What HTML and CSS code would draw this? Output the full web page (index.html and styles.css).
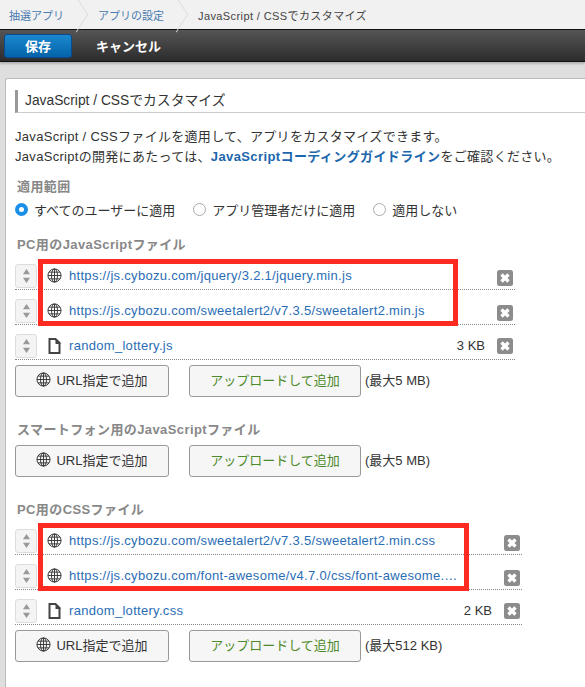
FILE: index.html
```html
<!DOCTYPE html>
<html lang="ja">
<head>
    <meta charset="UTF-8">
    <title>JavaScript / CSSでカスタマイズ</title>
    <link rel="stylesheet" href="styles.css">
</head>
<body>
    <svg class="defs" width="0" height="0">
        <symbol id="globe" viewBox="0 0 16 16">
            <g fill="none" stroke="#333" stroke-width="1">
                <circle cx="8" cy="8" r="7"/>
                <ellipse cx="8" cy="8" rx="3.2" ry="7"/>
                <path d="M8 1v14M1 8h14M2.2 4.4h11.6M2.2 11.6h11.6"/>
            </g>
        </symbol>
        <symbol id="file" viewBox="0 0 12 16">
            <path fill="none" stroke="#444" stroke-width="2" d="M1 1h6l4 4v10H1z"/>
            <path fill="#444" d="M7 1h1l4 4v1H7z"/>
        </symbol>
        <symbol id="updown" viewBox="0 0 10 18">
            <path fill="#999" d="M5 1l4 6H1zM5 17l-4-6h8z"/>
        </symbol>
        <symbol id="cross" viewBox="0 0 16 16">
            <rect width="16" height="16" rx="2.5" fill="#8c8c8c"/>
            <path stroke="#fff" stroke-width="3.4" d="M4.5 4.5l7 7M11.5 4.5l-7 7"/>
        </symbol>
    </svg>

    <nav class="breadcrumb">
        <a class="crumb" href="#">抽選アプリ</a>
        <a class="crumb" href="#">アプリの設定</a>
        <span class="crumb current">JavaScript / CSSでカスタマイズ</span>
    </nav>

    <div class="toolbar">
        <button class="save">保存</button>
        <button class="cancel">キャンセル</button>
    </div>

    <main class="page">
        <div class="card">
            <h1 class="title">JavaScript / CSSでカスタマイズ</h1>
            <p class="intro">JavaScript / CSSファイルを適用して、アプリをカスタマイズできます。<br>JavaScriptの開発にあたっては、<a class="guide" href="#">JavaScriptコーディングガイドライン</a>をご確認ください。</p>

            <h2 class="label scope-label">適用範囲</h2>
            <div class="scope">
                <label class="radio"><span class="dot on"></span>すべてのユーザーに適用</label>
                <label class="radio"><span class="dot"></span>アプリ管理者だけに適用</label>
                <label class="radio"><span class="dot"></span>適用しない</label>
            </div>

            <h2 class="label js-label">PC用のJavaScriptファイル</h2>
            <div class="files js-files">
                <div class="mark mark-js"></div>
                <div class="row url-row">
                    <span class="sort"><svg width="9" height="16"><use href="#updown"/></svg></span>
                    <svg class="icon" width="15" height="15"><use href="#globe"/></svg>
                    <a class="name" href="#">https://js.cybozu.com/jquery/3.2.1/jquery.min.js</a>
                    <svg class="remove" width="16" height="16"><use href="#cross"/></svg>
                </div>
                <div class="row url-row">
                    <span class="sort"><svg width="9" height="16"><use href="#updown"/></svg></span>
                    <svg class="icon" width="15" height="15"><use href="#globe"/></svg>
                    <a class="name" href="#">https://js.cybozu.com/sweetalert2/v7.3.5/sweetalert2.min.js</a>
                    <svg class="remove" width="16" height="16"><use href="#cross"/></svg>
                </div>
                <div class="row">
                    <span class="sort"><svg width="9" height="16"><use href="#updown"/></svg></span>
                    <svg class="icon" width="15" height="16"><use href="#file"/></svg>
                    <a class="name" href="#">random_lottery.js</a>
                    <span class="size">3 KB</span>
                    <svg class="remove" width="16" height="16"><use href="#cross"/></svg>
                </div>
            </div>
            <div class="actions">
                <button class="btn url"><svg width="15" height="15"><use href="#globe"/></svg>URL指定で追加</button>
                <button class="btn upload">アップロードして追加</button>
                <span class="limit">(最大5 MB)</span>
            </div>

            <h2 class="label phone-label">スマートフォン用のJavaScriptファイル</h2>
            <div class="actions">
                <button class="btn url"><svg width="15" height="15"><use href="#globe"/></svg>URL指定で追加</button>
                <button class="btn upload">アップロードして追加</button>
                <span class="limit">(最大5 MB)</span>
            </div>

            <h2 class="label css-label">PC用のCSSファイル</h2>
            <div class="files css-files">
                <div class="mark mark-css"></div>
                <div class="row url-row">
                    <span class="sort"><svg width="9" height="16"><use href="#updown"/></svg></span>
                    <svg class="icon" width="15" height="15"><use href="#globe"/></svg>
                    <a class="name" href="#">https://js.cybozu.com/sweetalert2/v7.3.5/sweetalert2.min.css</a>
                    <svg class="remove" width="16" height="16"><use href="#cross"/></svg>
                </div>
                <div class="row url-row">
                    <span class="sort"><svg width="9" height="16"><use href="#updown"/></svg></span>
                    <svg class="icon" width="15" height="15"><use href="#globe"/></svg>
                    <a class="name" href="#">https://js.cybozu.com/font-awesome/v4.7.0/css/font-awesome.min.css</a>
                    <svg class="remove" width="16" height="16"><use href="#cross"/></svg>
                </div>
                <div class="row">
                    <span class="sort"><svg width="9" height="16"><use href="#updown"/></svg></span>
                    <svg class="icon" width="15" height="16"><use href="#file"/></svg>
                    <a class="name" href="#">random_lottery.css</a>
                    <span class="size">2 KB</span>
                    <svg class="remove" width="16" height="16"><use href="#cross"/></svg>
                </div>
            </div>
            <div class="actions">
                <button class="btn url"><svg width="15" height="15"><use href="#globe"/></svg>URL指定で追加</button>
                <button class="btn upload">アップロードして追加</button>
                <span class="limit">(最大512 KB)</span>
            </div>
        </div>
    </main>
</body>
</html>
```

FILE: styles.css
```css
html, body {
    height: 687px;
    overflow: hidden;
}

body {
    margin: 0;
    font-family: "Liberation Sans", "Noto Sans CJK JP", sans-serif;
    font-size: 13px;
    color: #333;
    background-color: #dedede;
}

.defs {
    position: absolute;
}

button {
    font-family: inherit;
}

a {
    text-decoration: none;
}

.breadcrumb {
    display: flex;
    height: 29px;
    background-color: #f1f1f1;
}

.crumb {
    display: flex;
    align-items: center;
    position: relative;
    font-size: 11px;
    color: #4a7ab0;
    padding-left: 9px;
    padding-right: 25px;
}

.crumb:not(.current)::after {
    content: "";
    position: absolute;
    right: 2px;
    top: -1px;
    width: 20px;
    height: 20px;
    border-top: 1px solid #ddd;
    border-right: 1px solid #ddd;
    transform: translateY(5px) rotate(45deg) skew(12deg, 12deg);
}

.current {
    color: #444;
    letter-spacing: 0.4px;
}

.toolbar {
    display: flex;
    align-items: center;
    height: 31px;
    border-top: 1px solid #111;
    border-bottom: 1px solid #111;
    background: linear-gradient(#555, #2c2c2c);
    box-shadow: 0 2px 2px rgba(0, 0, 0, 0.2);
}

.save {
    width: 68px;
    height: 24px;
    margin-left: 4px;
    border: 1px solid #0a4a8c;
    border-radius: 3px;
    background: linear-gradient(#1b88cf, #0463a8);
    color: #fff;
    font-size: 13px;
    font-weight: bold;
}

.cancel {
    margin-left: 24px;
    padding: 0;
    border: none;
    background: none;
    color: #fff;
    font-size: 13px;
    font-weight: bold;
}

.page {
    padding: 16px 0 0 5px;
}

.card {
    height: 620px;
    padding: 11px 0 0 9px;
    background-color: #fff;
    border: 1px solid #bbb;
    border-right: none;
    border-radius: 3px 0 0 0;
}

.title {
    margin: 0;
    height: 22px;
    line-height: 22px;
    padding-left: 7px;
    border-left: 3px solid #999;
    border-bottom: 1px solid #ccc;
    font-size: 13.8px;
    font-weight: normal;
    color: #333;
}

.intro {
    margin: 14px 0 0;
    line-height: 20px;
    font-size: 13px;
    letter-spacing: 0.3px;
}

.guide {
    color: #1b66ad;
    font-weight: bold;
    letter-spacing: 0.4px;
}

.label {
    margin: 0 0 0 2px;
    font-size: 13px;
    line-height: 16px;
    font-weight: bold;
    color: #888;
    letter-spacing: 0.4px;
}

.scope-label {
    margin-top: 12px;
}

.scope {
    display: flex;
    gap: 18px;
    margin-top: 6px;
    font-size: 13px;
}

.radio {
    display: flex;
    align-items: center;
    gap: 6px;
    height: 16px;
}

.dot {
    width: 11px;
    height: 11px;
    border: 1px solid #aaa;
    border-radius: 50%;
    background-color: #fff;
}

.dot.on {
    width: 5px;
    height: 5px;
    border: 4px solid #1a8fe8;
}

.js-label {
    margin-top: 20px;
}

.phone-label,
.css-label {
    margin-top: 25px;
}

.files {
    position: relative;
    margin-top: 2px;
}

.js-files {
    width: 500px;
}

.css-files {
    width: 507px;
}

.row {
    display: flex;
    align-items: center;
    box-sizing: border-box;
    height: 35px;
    padding-top: 7px;
    border-bottom: 1px dotted #888;
}

.sort {
    display: flex;
    align-items: center;
    justify-content: center;
    flex: none;
    box-sizing: border-box;
    width: 22px;
    height: 24px;
    border: 1px solid #ddd;
    border-radius: 3px;
    background-color: #f4f4f4;
}

.icon {
    flex: none;
    margin-left: 10px;
}

.name {
    flex: 1;
    min-width: 0;
    margin-left: 7px;
    font-size: 13px;
    letter-spacing: 0.3px;
    color: #2a6db5;
    white-space: nowrap;
    overflow: hidden;
    text-overflow: ellipsis;
}

.size {
    flex: none;
    margin-left: 8px;
    font-size: 13px;
}

.remove {
    flex: none;
    margin: 0 2px 0 12px;
}

.url-row .remove {
    margin-left: 45px;
    margin-top: 4px;
}

.mark {
    position: absolute;
    left: 23px;
    box-sizing: border-box;
    border: 5px solid #fc2a20;
}

.mark-js {
    top: 4px;
    width: 420px;
    height: 67px;
}

.mark-css {
    top: 3px;
    width: 431px;
    height: 68px;
}

.actions {
    display: flex;
    align-items: center;
    margin-top: 5px;
}

.phone-label + .actions {
    margin-top: 7px;
}

.btn {
    height: 32px;
    padding: 0 0 3px;
    border: 1px solid #999;
    border-radius: 3px;
    background-color: #f6f6f6;
    font-size: 13px;
}

.url {
    display: flex;
    align-items: center;
    justify-content: center;
    gap: 5px;
    width: 154px;
    color: #333;
}

.upload {
    width: 172px;
    margin-left: 20px;
    color: #4d8a2a;
}

.limit {
    margin-left: 4px;
    padding-bottom: 3px;
    font-size: 13px;
}
```
